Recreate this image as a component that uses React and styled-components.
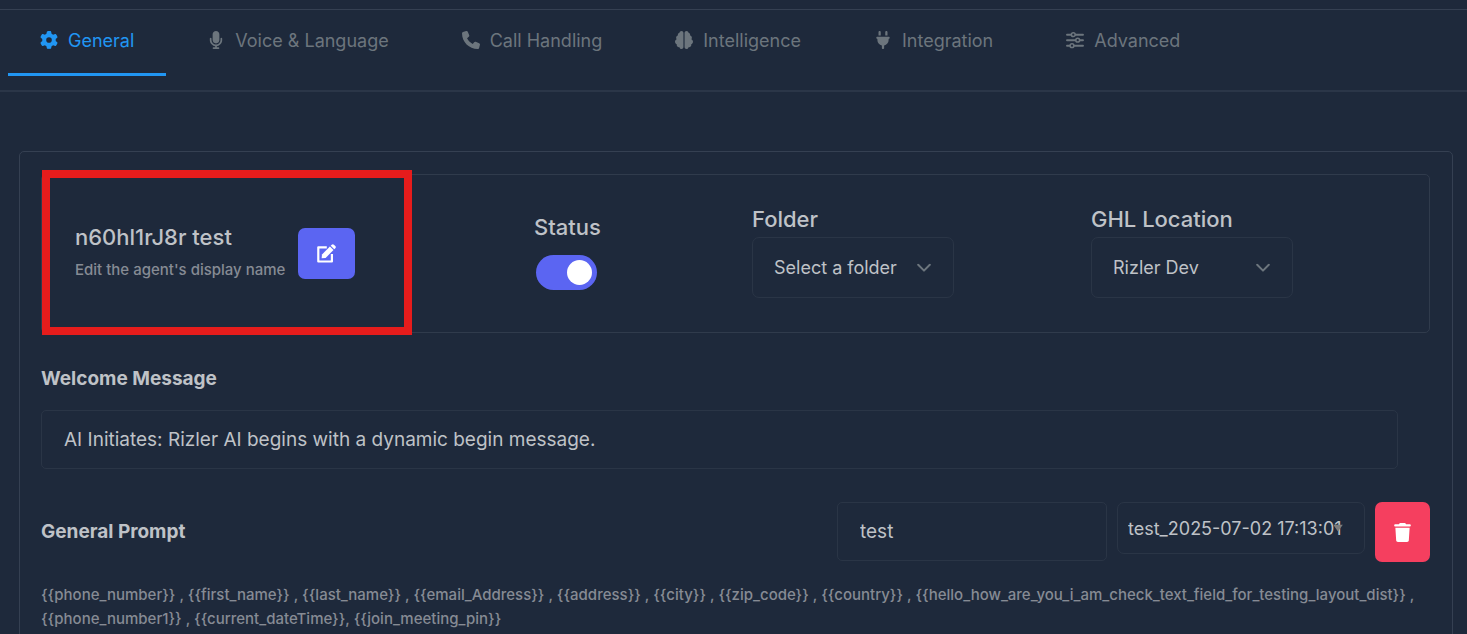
import React from "react";
import styled, { createGlobalStyle } from "styled-components";
import { FaGear, FaMicrophone, FaPhone, FaBrain, FaPlug, FaTrash } from "react-icons/fa6";

const Global = createGlobalStyle`
  *, *::before, *::after { box-sizing: border-box; }
  body {
    margin: 0;
    background: #1e293b;
    color: #bfc2c7;
    font-family: Inter, "Liberation Sans", sans-serif;
    font-size: 18px;
  }
  button, input, select { font: inherit; color: inherit; margin: 0; }
`;

const Page = styled.div`
  padding-top: 9px;
`;

const TabBar = styled.nav`
  display: flex;
  align-items: flex-start;
  gap: 9px;
  height: 83px;
  padding: 0 8px;
  border-top: 1px solid #354052;
  border-bottom: 2px solid #2b3648;
`;

const Tab = styled.button`
  display: flex;
  align-items: flex-start;
  gap: 10px;
  height: 66px;
  padding: 19px 32px 0;
  border: 0;
  border-bottom: 3px solid ${(p) => (p.$active ? "#2196f3" : "transparent")};
  background: none;
  color: ${(p) => (p.$active ? "#2196f3" : "#6c757d")};
  line-height: 24px;
  white-space: nowrap;
  cursor: pointer;
  svg {
    flex: none;
    width: auto;
    height: 18px;
    margin-top: 2px;
  }
`;

const Panel = styled.main`
  margin: 59px 14px 0 19px;
  padding: 22px 22px 40px 21px;
  border: 1px solid #354052;
  border-radius: 5px;
`;

const AgentCard = styled.section`
  position: relative;
  display: grid;
  grid-template-columns: 492fr 218fr 339fr 338fr;
  align-items: center;
  height: 159px;
  border: 1px solid #303b4c;
  border-radius: 5px;
`;

const Highlight = styled.div`
  position: absolute;
  left: 0;
  top: -5px;
  width: 370px;
  height: 165px;
  border: 8px solid #e61c1c;
  pointer-events: none;
`;

const Agent = styled.div`
  display: flex;
  align-items: center;
  gap: 13px;
  padding-left: 33px;
`;

const AgentText = styled.div`
  padding-bottom: 4px;
`;

const AgentName = styled.h2`
  margin: 0;
  font-size: 22px;
  font-weight: 500;
  line-height: 36px;
`;

const Hint = styled.p`
  margin: 0;
  color: #868b94;
  font-size: 15px;
  font-weight: 500;
  line-height: 30px;
`;

const IconButton = styled.button`
  display: flex;
  align-items: center;
  justify-content: center;
  width: ${(p) => p.$width}px;
  height: ${(p) => p.$height}px;
  padding: 0;
  border: 0;
  border-radius: 7px;
  background: ${(p) => p.$color};
  color: #fff;
  cursor: pointer;
`;

const Field = styled.div`
  display: flex;
  flex-direction: column;
  align-items: flex-start;
  gap: ${(p) => p.$gap || 0}px;
  padding-bottom: 8px;
`;

const Label = styled.label`
  font-size: 22px;
  font-weight: 500;
  line-height: 36px;
`;

const Switch = styled.input`
  appearance: none;
  display: flex;
  align-items: center;
  width: 61px;
  height: 35px;
  margin: 0 2px;
  padding: 0 5px;
  border-radius: 18px;
  background: #5b65f2;
  cursor: pointer;
  &::after {
    content: "";
    width: 25px;
    height: 25px;
    border-radius: 50%;
    background: #fff;
  }
  &:checked::after { margin-left: auto; }
`;

const SelectWrap = styled.div`
  position: relative;
  width: ${(p) => p.$width}px;
  svg {
    position: absolute;
    right: ${(p) => p.$inset}px;
    top: 50%;
    transform: translateY(-50%);
    pointer-events: none;
  }
`;

const Select = styled.select`
  appearance: none;
  display: block;
  width: 100%;
  height: ${(p) => p.$height}px;
  padding: 0 0 0 ${(p) => p.$pad}px;
  border: 1px solid #2a3546;
  border-radius: 7px;
  background: transparent;
  text-overflow: clip;
`;

const Heading = styled.h3`
  margin: 0;
  font-size: 19px;
  font-weight: 700;
  line-height: 28px;
`;

const TextInput = styled.input`
  display: block;
  width: ${(p) => p.$width || "100%"};
  height: 59px;
  padding: 0 22px;
  border: 1px solid #2a3546;
  border-radius: 5px;
  background: transparent;
  font-size: 19px;
`;

const Welcome = styled.section`
  display: flex;
  flex-direction: column;
  gap: 17px;
  padding: 32px 32px 0 0;
`;

const PromptRow = styled.section`
  display: flex;
  align-items: center;
  justify-content: space-between;
  margin-top: 33px;
`;

const PromptTools = styled.div`
  display: flex;
  align-items: flex-start;
  gap: 10px;
`;

const Variables = styled.p`
  margin: 21px 0 0;
  color: #868b94;
  font-size: 15px;
  font-weight: 500;
  line-height: 24px;
`;

function Sliders() {
  return (
    <svg width="18" height="18" viewBox="0 0 18 18" fill="none" stroke="currentColor" strokeLinecap="round" aria-hidden="true">
      <path strokeWidth="1.9" d="M1 3.7h3.9M9.7 3.7H17M1 9.2h8.3M14.1 9.2H17M1 14.7h2.6M8.4 14.7H17" />
      <g strokeWidth="1.5">
        <circle cx="7.3" cy="3.7" r="1.9" />
        <circle cx="11.7" cy="9.2" r="1.9" />
        <circle cx="6" cy="14.7" r="1.9" />
      </g>
    </svg>
  );
}

function EditIcon() {
  return (
    <svg width="19" height="19" viewBox="0 0 19 19" fill="currentColor" aria-hidden="true">
      <path fill="none" stroke="currentColor" strokeWidth="2.2" strokeLinejoin="round" d="M9.8 3.3H1.3v14.2h13.6V10" />
      <path d="M4.6 14.2 5 10.4l7.9-8L16.5 6l-7.9 7.9z" />
      <path d="m13.7 1.7 1-1a1.6 1.6 0 0 1 2.2 0l1.4 1.4a1.6 1.6 0 0 1 0 2.2l-1 1z" />
    </svg>
  );
}

function Chevron() {
  return (
    <svg width="14" height="9" viewBox="0 0 14 9" fill="none" stroke="#6c757d" strokeWidth="2" strokeLinecap="round" strokeLinejoin="round" aria-hidden="true">
      <path d="M1.2 1.3 7 7.1l5.8-5.8" />
    </svg>
  );
}

function Caret() {
  return (
    <svg width="10" height="7" viewBox="0 0 10 7" fill="#7c7c7c" aria-hidden="true">
      <path d="M0 0h10L5 7z" />
    </svg>
  );
}

const tabs = [
  { name: "General", icon: <FaGear /> },
  { name: "Voice & Language", icon: <FaMicrophone /> },
  { name: "Call Handling", icon: <FaPhone /> },
  { name: "Intelligence", icon: <FaBrain /> },
  { name: "Integration", icon: <FaPlug /> },
  { name: "Advanced", icon: <Sliders /> },
];

export default function App() {
  return (
    <>
      <Global />
      <Page>
        <TabBar aria-label="Agent settings">
          {tabs.map((t, i) => (
            <Tab key={t.name} type="button" $active={i === 0}>
              {t.icon}
              {t.name}
            </Tab>
          ))}
        </TabBar>
        <Panel>
          <AgentCard>
            <Agent>
              <AgentText>
                <AgentName>n60hl1rJ8r test</AgentName>
                <Hint>Edit the agent's display name</Hint>
              </AgentText>
              <IconButton type="button" aria-label="Edit name" $width={57} $height={51} $color="#5b65f2">
                <EditIcon />
              </IconButton>
            </Agent>
            <Field $gap={10}>
              <Label htmlFor="status">Status</Label>
              <Switch id="status" type="checkbox" defaultChecked />
            </Field>
            <Field>
              <Label htmlFor="folder">Folder</Label>
              <SelectWrap $width={202} $inset={23}>
                <Select id="folder" $height={61} $pad={21}>
                  <option>Select a folder</option>
                </Select>
                <Chevron />
              </SelectWrap>
            </Field>
            <Field>
              <Label htmlFor="location">GHL Location</Label>
              <SelectWrap $width={202} $inset={23}>
                <Select id="location" $height={61} $pad={21}>
                  <option>Rizler Dev</option>
                </Select>
                <Chevron />
              </SelectWrap>
            </Field>
            <Highlight />
          </AgentCard>
          <Welcome>
            <Heading as="label" htmlFor="welcome">Welcome Message</Heading>
            <TextInput id="welcome" type="text" defaultValue="AI Initiates: Rizler AI begins with a dynamic begin message." />
          </Welcome>
          <PromptRow>
            <Heading>General Prompt</Heading>
            <PromptTools>
              <TextInput type="text" aria-label="Prompt name" $width="270px" defaultValue="test" />
              <SelectWrap $width={248} $inset={22}>
                <Select aria-label="Prompt version" $height={52} $pad={10}>
                  <option>test_2025-07-02 17:13:01</option>
                </Select>
                <Caret />
              </SelectWrap>
              <IconButton type="button" aria-label="Delete prompt" $width={55} $height={60} $color="#f53f5f">
                <FaTrash size={19} />
              </IconButton>
            </PromptTools>
          </PromptRow>
          <Variables>
            {"{{phone_number}} , {{first_name}} , {{last_name}} , {{email_Address}} , {{address}} , {{city}} , {{zip_code}} , {{country}} , {{hello_how_are_you_i_am_check_text_field_for_testing_layout_dist}} , {{phone_number1}} , {{current_dateTime}}, {{join_meeting_pin}}"}
          </Variables>
        </Panel>
      </Page>
    </>
  );
}
